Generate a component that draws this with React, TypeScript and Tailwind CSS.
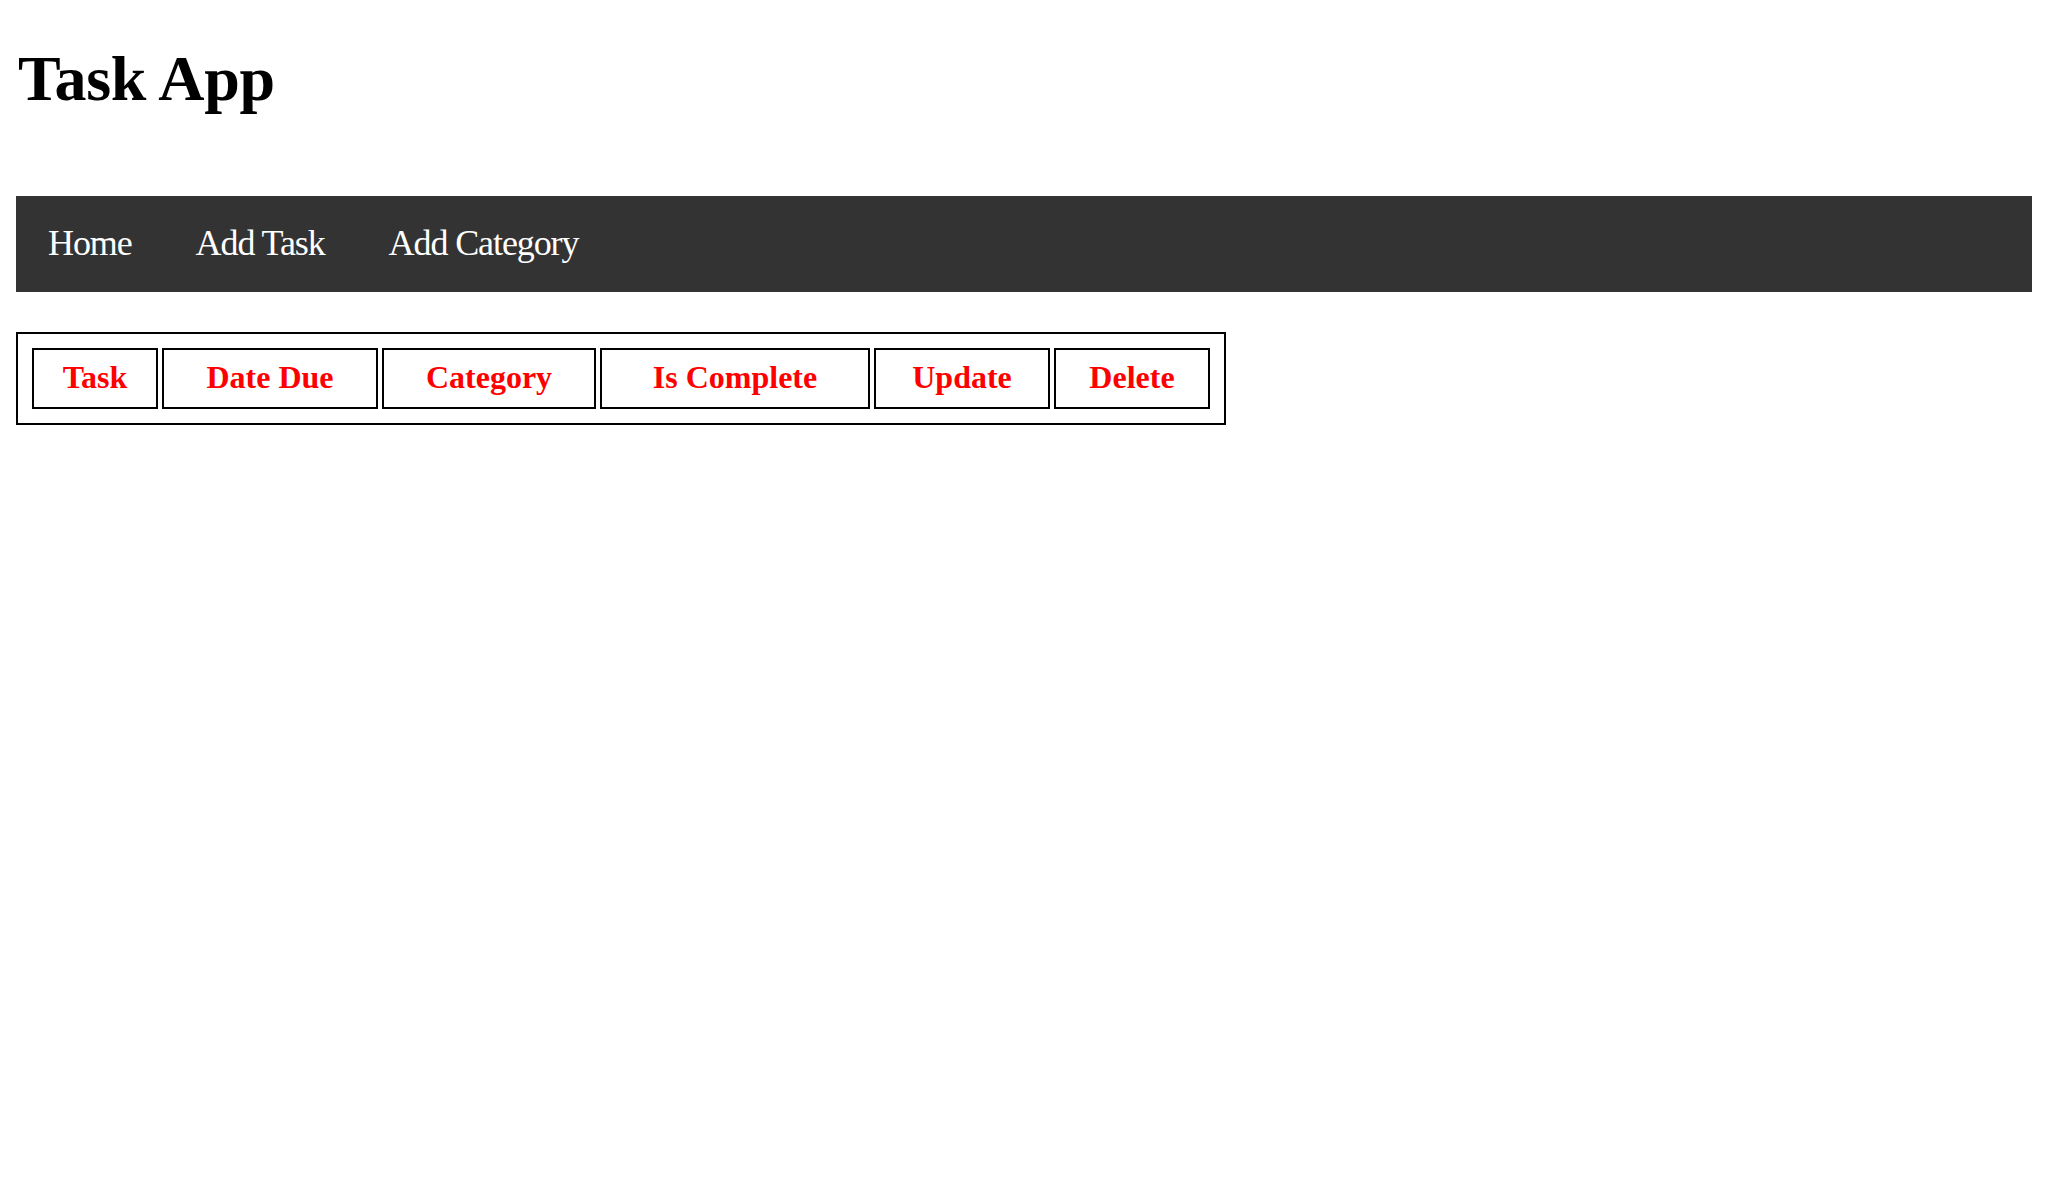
import React from "react";

const cols = [
  { label: "Task", w: "w-[126px]" },
  { label: "Date Due", w: "w-[216px]" },
  { label: "Category", w: "w-[214px]" },
  { label: "Is Complete", w: "w-[270px]" },
  { label: "Update", w: "w-[176px]" },
  { label: "Delete", w: "w-[156px]" },
];

export default function App() {
  return (
    <div className="min-h-[1200px] bg-white px-[16px] font-['Liberation_Serif',serif] text-black">
      <h1 className="mt-[43px] h-[71px] text-[64px] leading-[71px] font-bold tracking-[-0.3px] pl-[2px]">
        Task App
      </h1>
      <nav className="mt-[82px] flex h-[96px] items-center bg-[#333333] pb-[2px]">
        {["Home", "Add Task", "Add Category"].map((t) => (
          <a
            key={t}
            href="#"
            className="px-[32px] text-[36px] leading-[40px] tracking-[-1.1px] text-white"
          >
            {t}
          </a>
        ))}
      </nav>
      <table className="mt-[40px] w-[1210px] table-fixed border-separate border-spacing-[4px] border-2 border-black p-[10px]">
        <thead>
          <tr>
            {cols.map((c) => (
              <th
                key={c.label}
                className={`${c.w} h-[61px] border-2 border-black pb-[3px] text-center align-middle text-[32px] leading-[36px] font-bold text-[#ff0000]`}
              >
                {c.label}
              </th>
            ))}
          </tr>
        </thead>
      </table>
    </div>
  );
}
